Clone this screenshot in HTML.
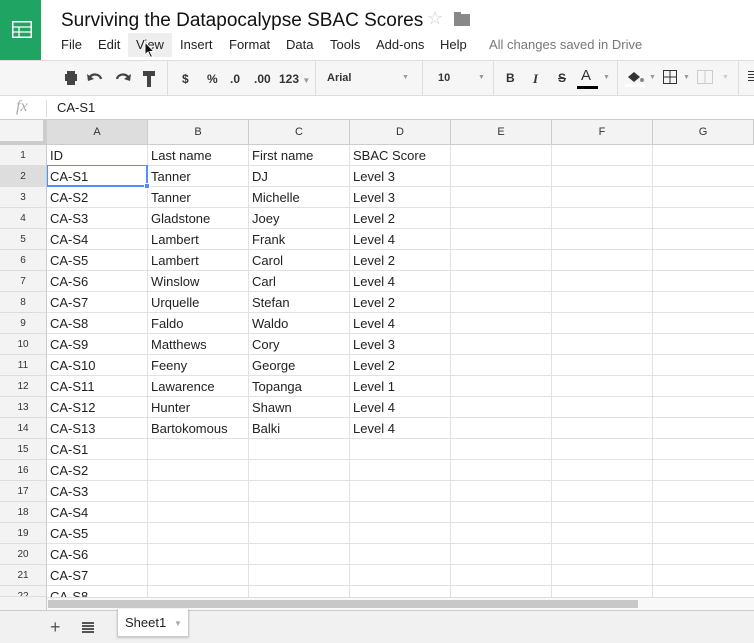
<!DOCTYPE html>
<html><head><meta charset="utf-8"><style>
*{margin:0;padding:0;box-sizing:border-box}
body{width:754px;height:643px;overflow:hidden;background:#fff;font-family:"Liberation Sans",Arial,sans-serif;position:relative;color:#222}
.a{position:absolute}
.menu span{position:absolute;top:37px;font-size:13px;color:#222}
.tb{position:absolute;font-size:12px;color:#333;font-weight:bold}
.sep{position:absolute;top:61px;width:1px;height:35px;background:#ddd}
.col{position:absolute;top:120px;height:25px;background:#f3f3f3;border-right:1px solid #ccc;border-bottom:1px solid #ccc;font-size:11px;text-align:center;line-height:24px;color:#333}
.rh{position:absolute;left:0;width:47px;background:#f3f3f3;border-right:1px solid #ccc;border-bottom:1px solid #ddd;font-size:10px;text-align:center;line-height:21px;color:#333}
.vl{position:absolute;top:145px;width:1px;height:452px;background:#e2e2e2}
.hl{position:absolute;left:47px;width:707px;height:1px;background:#e2e2e2}
.c{position:absolute;font-size:13px;line-height:21px;white-space:nowrap;color:#222}
</style></head><body>
<div class="a" style="left:0;top:0;width:41px;height:60px;background:#1fa463"></div>
<svg class="a" style="left:12px;top:21px" width="20" height="17" viewBox="0 0 20 17"><rect x="0.75" y="0.75" width="18.5" height="15.5" fill="none" stroke="#fff" stroke-width="1.5"/><line x1="1" y1="6" x2="19" y2="6" stroke="#fff" stroke-width="1.3"/><line x1="1" y1="11" x2="19" y2="11" stroke="#fff" stroke-width="1.3"/><line x1="7" y1="6" x2="7" y2="16" stroke="#fff" stroke-width="1.3"/></svg>
<div class="a" style="left:61px;top:10px;font-size:19px;color:#111">Surviving the Datapocalypse SBAC Scores</div>
<div class="a" style="left:427px;top:8px;font-size:18px;color:#ccc">☆</div>
<div class="a" style="left:454px;top:14px;width:16px;height:12px;background:#888"></div>
<div class="a" style="left:454px;top:12px;width:7px;height:3px;background:#888"></div>
<div class="a" style="left:128px;top:33px;width:44px;height:24px;background:#eee"></div>
<div class="menu"><span style="left:61px">File</span><span style="left:98px">Edit</span><span style="left:136px">View</span><span style="left:180px">Insert</span><span style="left:229px">Format</span><span style="left:286px">Data</span><span style="left:330px">Tools</span><span style="left:376px">Add-ons</span><span style="left:440px">Help</span><span style="left:489px;color:#777">All changes saved in Drive</span></div>
<svg class="a" style="left:144px;top:41px" width="12" height="18" viewBox="0 0 12 18"><path d="M1 1 L1 14 L4 11 L6.5 16.5 L8.5 15.5 L6 10.5 L10 10.5 Z" fill="#111" stroke="#fff" stroke-width="1"/></svg>
<div class="a" style="left:0;top:60px;width:754px;height:36px;background:#f6f6f6;border-top:1px solid #ddd;border-bottom:1px solid #ddd"></div>
<svg class="a" style="left:63px;top:70px" width="98" height="18" viewBox="0 0 98 18"><rect x="2" y="4" width="12" height="7" fill="#444"/><rect x="4" y="1" width="8" height="3" fill="#444"/><rect x="4" y="10" width="8" height="5" fill="#444"/><path d="M26 10 A6 5 0 0 1 38 9" fill="none" stroke="#444" stroke-width="2.2"/><path d="M24 4 L25 11 L31 9 Z" fill="#444"/><path d="M66 10 A6 5 0 0 0 54 9" fill="none" stroke="#444" stroke-width="2.2"/><path d="M68 4 L67 11 L61 9 Z" fill="#444"/><rect x="80" y="1" width="12" height="5" fill="#444"/><rect x="84" y="6" width="4" height="11" fill="#444"/></svg>
<div class="sep" style="left:167px"></div>
<div class="tb" style="left:182px;top:72px">$</div>
<div class="tb" style="left:207px;top:72px">%</div>
<div class="tb" style="left:230px;top:72px">.0</div>
<div class="tb" style="left:254px;top:72px">.00</div>
<div class="tb" style="left:279px;top:72px">123 <span style="color:#999;font-size:8px">▼</span></div>
<div class="sep" style="left:315px"></div>
<div class="tb" style="left:327px;top:72px;font-size:11px">Arial</div>
<div class="a" style="left:402px;top:74px;font-size:7px;color:#999">▼</div>
<div class="sep" style="left:422px"></div>
<div class="tb" style="left:438px;top:72px;font-size:11px">10</div>
<div class="a" style="left:478px;top:74px;font-size:7px;color:#999">▼</div>
<div class="sep" style="left:493px"></div>
<div class="tb" style="left:506px;top:71px">B</div>
<div class="tb" style="left:533px;top:71px;font-style:italic;font-family:'Liberation Serif',serif;font-size:13px">I</div>
<div class="tb" style="left:558px;top:71px;text-decoration:line-through">S</div>
<div class="a" style="left:581px;top:67px;font-size:15px;color:#333">A</div>
<div class="a" style="left:577px;top:86px;width:21px;height:3px;background:#000"></div>
<div class="a" style="left:603px;top:74px;font-size:7px;color:#999">▼</div>
<div class="sep" style="left:617px"></div>
<svg class="a" style="left:625px;top:69px" width="22" height="18"><path d="M3 8 L9 3 L15 8 L9 13 Z" fill="#333"/><circle cx="17" cy="11" r="2" fill="#888"/><rect x="0" y="15" width="20" height="3" fill="#fff"/></svg>
<div class="a" style="left:649px;top:74px;font-size:7px;color:#999">▼</div>
<svg class="a" style="left:663px;top:70px" width="14" height="14"><rect x="0.5" y="0.5" width="13" height="13" fill="none" stroke="#333"/><line x1="7" y1="0" x2="7" y2="14" stroke="#333"/><line x1="0" y1="7" x2="14" y2="7" stroke="#333"/></svg>
<div class="a" style="left:683px;top:74px;font-size:7px;color:#999">▼</div>
<svg class="a" style="left:697px;top:70px" width="16" height="14"><rect x="0.5" y="0.5" width="15" height="13" fill="none" stroke="#ccc"/><line x1="8" y1="0" x2="8" y2="14" stroke="#ccc"/></svg>
<div class="a" style="left:722px;top:74px;font-size:7px;color:#ccc">▼</div>
<div class="sep" style="left:738px"></div>
<div class="a" style="left:748px;top:71px;width:6px;height:12px;background:repeating-linear-gradient(#333 0 1px,transparent 1px 3px)"></div>
<div class="a" style="left:0;top:96px;width:754px;height:24px;background:#fff;border-bottom:1px solid #ccc"></div>
<div class="a" style="left:16px;top:98px;font-family:'Liberation Serif',serif;font-style:italic;font-size:16px;color:#aaa">fx</div>
<div class="a" style="left:46px;top:100px;width:1px;height:17px;background:#ddd"></div>
<div class="a" style="left:57px;top:100px;font-size:13px">CA-S1</div>
<div class="a" style="left:0;top:120px;width:47px;height:25px;background:#f3f3f3;border-right:4px solid #ccc;border-bottom:4px solid #ccc"></div>
<div class="col" style="left:47px;width:101px;background:#ddd">A</div>
<div class="col" style="left:148px;width:101px">B</div>
<div class="col" style="left:249px;width:101px">C</div>
<div class="col" style="left:350px;width:101px">D</div>
<div class="col" style="left:451px;width:101px">E</div>
<div class="col" style="left:552px;width:101px">F</div>
<div class="col" style="left:653px;width:101px">G</div>
<div class="vl" style="left:147px"></div><div class="vl" style="left:248px"></div><div class="vl" style="left:349px"></div><div class="vl" style="left:450px"></div><div class="vl" style="left:551px"></div><div class="vl" style="left:652px"></div>
<div id="rows"></div>
<script>
var d=[["ID","Last name","First name","SBAC Score"],["CA-S1","Tanner","DJ","Level 3"],["CA-S2","Tanner","Michelle","Level 3"],["CA-S3","Gladstone","Joey","Level 2"],["CA-S4","Lambert","Frank","Level 4"],["CA-S5","Lambert","Carol","Level 2"],["CA-S6","Winslow","Carl","Level 4"],["CA-S7","Urquelle","Stefan","Level 2"],["CA-S8","Faldo","Waldo","Level 4"],["CA-S9","Matthews","Cory","Level 3"],["CA-S10","Feeny","George","Level 2"],["CA-S11","Lawarence","Topanga","Level 1"],["CA-S12","Hunter","Shawn","Level 4"],["CA-S13","Bartokomous","Balki","Level 4"],["CA-S1"],["CA-S2"],["CA-S3"],["CA-S4"],["CA-S5"],["CA-S6"],["CA-S7"],["CA-S8"]];
var h="",xs=[50,151,252,353];
for(var i=0;i<22;i++){var t=145+i*21;
h+='<div class="rh" style="top:'+t+'px;height:'+(i==21?11:21)+'px;'+(i==1?'background:#ddd;':'')+'overflow:hidden">'+(i+1)+'</div>';
h+='<div class="hl" style="top:'+(t+20)+'px"></div>';
for(var j=0;j<d[i].length;j++)h+='<div class="c" style="left:'+xs[j]+'px;top:'+t+'px">'+d[i][j]+'</div>';}
document.getElementById("rows").innerHTML=h;
</script>
<div class="a" style="left:47px;top:165px;width:101px;height:22px;border:1px solid #4d90fe;border-width:1px 2px 2px 1px"></div>
<div class="a" style="left:144px;top:183px;width:6px;height:6px;background:#4d90fe;border:1px solid #fff"></div>
<div class="a" style="left:0;top:597px;width:754px;height:13px;background:#f8f8f8;border-top:1px solid #ddd"></div>
<div class="a" style="left:0;top:597px;width:47px;height:13px;background:#f3f3f3;border-right:1px solid #ccc"></div>
<div class="a" style="left:48px;top:600px;width:590px;height:8px;background:#c8c8c8"></div>
<div class="a" style="left:0;top:610px;width:754px;height:33px;background:#f1f1f1;border-top:1px solid #ccc"></div>
<div class="a" style="left:50px;top:617px;font-size:18px;color:#555">+</div>
<div class="a" style="left:82px;top:622px;width:12px;height:11px;background:repeating-linear-gradient(#555 0 2px,transparent 2px 3px)"></div>
<div class="a" style="left:117px;top:609px;width:72px;height:28px;background:#fff;border:1px solid #ccc;border-top:none;box-shadow:0 1px 2px rgba(0,0,0,.2)"></div>
<div class="a" style="left:125px;top:615px;font-size:13px">Sheet1</div>
<div class="a" style="left:174px;top:619px;font-size:8px;color:#aaa">▼</div>
</body></html>
